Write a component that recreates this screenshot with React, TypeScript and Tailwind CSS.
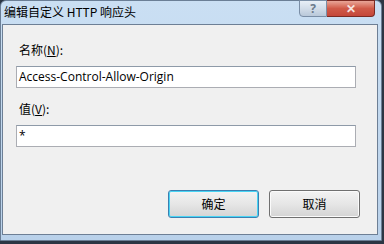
const cjk = { fontFamily: '"Noto Sans CJK SC", "Liberation Sans", sans-serif' };
const latin = { fontFamily: '"Open Sans", "Noto Sans CJK SC", sans-serif' };

function Field({ label, hotkey, value }: { label: string; hotkey: string; value: string }) {
  return (
    <div className="flex flex-col">
      <div className="text-[12px] leading-[16px] text-black pl-[3px]" style={cjk}>
        {label}(<span className="underline">{hotkey}</span>):
      </div>
      <div
        className="mt-[8px] w-[340px] h-[22px] bg-white border border-[#abadb3] border-t-[#8e9aa8] flex items-center pl-[2px] text-[12px] text-black"
        style={latin}
      >
        {value}
      </div>
    </div>
  );
}

function DialogButton({ label, focused }: { label: string; focused?: boolean }) {
  return (
    <button
      className={`w-[91px] h-[28px] rounded-[3px] border text-[12px] text-black bg-gradient-to-b from-[#f3f3f3] via-[#e6e6e6] to-[#d4d4d4] ${
        focused ? "border-[#3c7fb1] shadow-[inset_0_0_0_1px_#48d4f4]" : "border-[#707070] shadow-[inset_0_0_0_1px_#fbfbfb]"
      }`}
      style={cjk}
    >
      {label}
    </button>
  );
}

export default function App() {
  return (
    <div className="w-[384px] h-[244px] bg-[#2c3644] overflow-hidden">
      <div className="w-[382px] h-[241px] rounded-t-[6px] border border-[#6b7f96] bg-gradient-to-b from-[#cadff3] to-[#b9d1ea] flex flex-col pl-[1px] pr-[3px] pb-[5px]">
        <div className="h-[23px] flex items-start justify-between">
          <div className="pt-[2px] pl-[2px] text-[12px] leading-[17px] text-black" style={cjk}>
            编辑自定义 HTTP 响应头
          </div>
          <div className="flex -mt-[1px] mr-[3px]">
            <div
              className="w-[28px] h-[17px] rounded-bl-[4px] border border-[#7a8ea6] bg-gradient-to-b from-[#e8eff7] via-[#d2dde9] to-[#b9c8d9] flex items-center justify-center text-[12px] font-bold text-[#6b7a8c]"
              style={latin}
            >
              ?
            </div>
            <div
              className="w-[48px] h-[17px] rounded-br-[4px] border border-l-0 border-[#7b2a22] bg-gradient-to-b from-[#e8a597] via-[#d05a48] to-[#c4473a] flex items-center justify-center text-[#f6e4e0] text-[12px] font-bold"
              style={latin}
            >
              ✕
            </div>
          </div>
        </div>
        <div className="flex-1 bg-[#f0f0f0] border border-[#6d7f95] flex flex-col pl-[13px] pt-[17px]">
          <Field label="名称" hotkey="N" value="Access-Control-Allow-Origin" />
          <div className="h-[13px]" />
          <Field label="值" hotkey="V" value="*" />
          <div className="flex gap-[10px] pl-[152px] mt-[43px]">
            <DialogButton label="确定" focused />
            <DialogButton label="取消" />
          </div>
        </div>
      </div>
    </div>
  );
}
